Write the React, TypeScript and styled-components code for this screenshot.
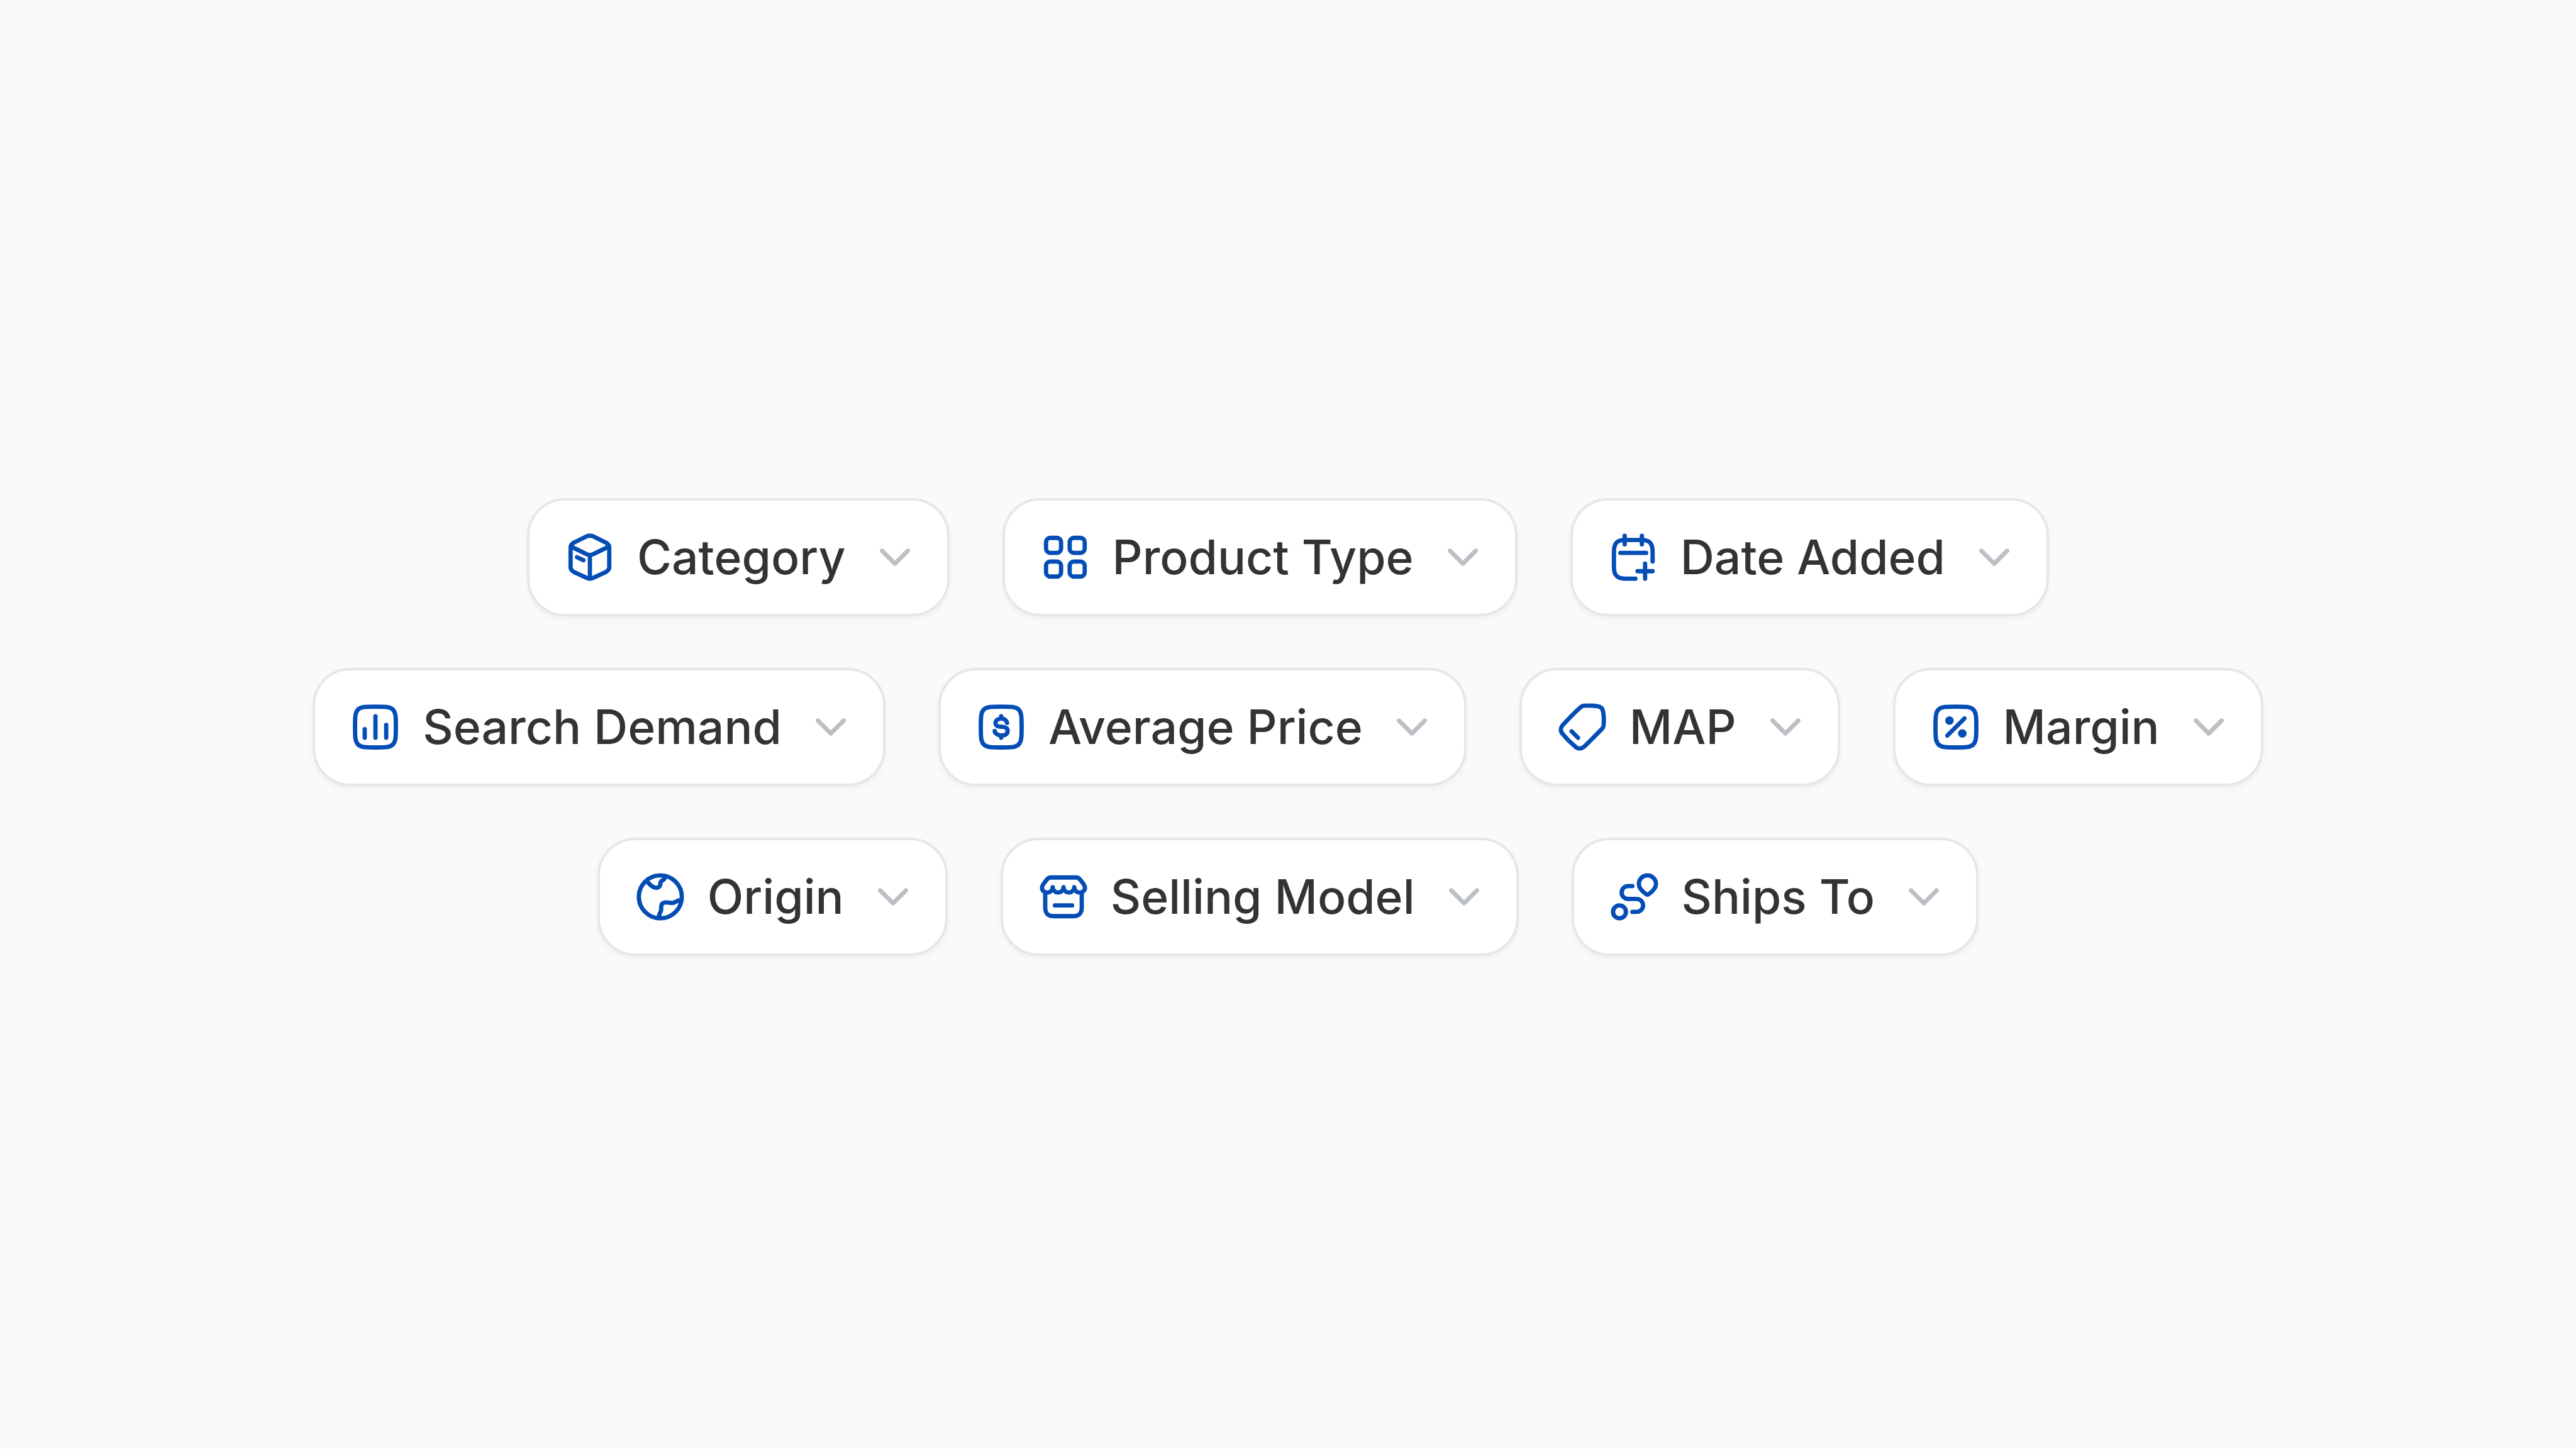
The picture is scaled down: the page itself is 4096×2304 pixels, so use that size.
import React from "react";
import styled, { createGlobalStyle } from "styled-components";

const GlobalStyle = createGlobalStyle`
  body {
    margin: 0;
    background: #fafafa;
    font-family: Inter, "Liberation Sans", sans-serif;
  }
`;

const Page = styled.main`
  min-height: 100vh;
  box-sizing: border-box;
  padding-top: 8px;
  display: flex;
  flex-direction: column;
  align-items: center;
  justify-content: center;
  gap: 82px;
`;

const Row = styled.div`
  display: flex;
  justify-content: center;
  gap: 84px;
`;

const Chip = styled.button`
  display: flex;
  align-items: center;
  padding: 49px 42px 49px 55px;
  border: 4px solid #e7e7e7;
  border-radius: 60px;
  background: #ffffff;
  box-shadow: 0 4px 8px rgba(0, 0, 0, 0.05);
  font: inherit;
  color: #333333;
  cursor: pointer;
`;

const Label = styled.span`
  margin: 0 37px 0 34px;
  font-size: 75px;
  line-height: 82px;
  font-weight: 500;
  white-space: nowrap;
`;

const Icon = styled.svg<{ $tone: string }>`
  width: 82px;
  height: 82px;
  flex: none;
  fill: none;
  stroke: ${(p) => p.$tone};
  stroke-width: 2;
  stroke-linecap: round;
  stroke-linejoin: round;
`;

const squircle =
  "M2.5 12C2.5 7.52 2.5 5.28 3.89 3.89C5.28 2.5 7.52 2.5 12 2.5C16.48 2.5 18.72 2.5 20.11 3.89C21.5 5.28 21.5 7.52 21.5 12C21.5 16.48 21.5 18.72 20.11 20.11C18.72 21.5 16.48 21.5 12 21.5C7.52 21.5 5.28 21.5 3.89 20.11C2.5 18.72 2.5 16.48 2.5 12Z";

const icons = {
  cube: (
    <>
      <path d="M10.2 2.4C11.3 1.9 12.7 1.9 13.8 2.4L19.4 5.2C20.4 5.8 21 6.4 21 7.3V16.7C21 17.6 20.4 18.3 19.4 18.9L13.8 21.5C12.7 22.1 11.3 22.1 10.2 21.5L4.6 18.9C3.6 18.3 3 17.6 3 16.7V7.3C3 6.4 3.6 5.8 4.6 5.2Z" />
      <path d="M3.7 7.3L10.3 10.5C11.4 11.1 12.6 11.1 13.7 10.5L20.3 7.3M12 11V21.5M6 12L9 13.4" />
    </>
  ),
  grid: (
    <>
      <rect x="3" y="3" width="7" height="7" rx="2" />
      <rect x="14" y="3" width="7" height="7" rx="2" />
      <rect x="3" y="14" width="7" height="7" rx="2" />
      <rect x="14" y="14" width="7" height="7" rx="2" />
    </>
  ),
  calendar: (
    <path d="M8 2V6M16 2V6M6 10H18M21 14V9.5C21 5.6 19.6 4 16 4H8C4.4 4 3 5.6 3 9.5V16.5C3 20.5 4.6 22 8.5 22H13M17.5 15V22M14 18.5H21" />
  ),
  chart: <path d={`${squircle}M7 17V13M12 17V7M17 17V11`} />,
  dollar: (
    <>
      <path d={squircle} />
      <path d="M14.71 10.06C14.61 9.3 13.74 8.07 12.16 8.07C10.33 8.07 9.56 9.08 9.41 9.59C9.16 10.26 9.21 11.66 11.35 11.81C14.04 12 15.11 12.32 14.97 13.96C14.84 15.6 13.34 15.95 12.16 15.91C10.98 15.88 9.05 15.33 8.97 13.87M11.97 7V8.07M11.97 15.9V17" />
    </>
  ),
  tag: (
    <path d="M12.7 2.1C15.5 1.9 18 2 19.8 2.5C20.8 2.8 21.2 3.2 21.5 4.2C22 6 22.1 8.5 21.9 11.3C21.8 12 21.7 12.3 21.2 12.8C18.6 15.4 15.6 18.6 12.8 21.2C11.6 22.2 10 22.3 8.8 21.2C6.6 19.4 4.6 17.4 2.8 15.2C1.7 13.9 1.8 12.4 2.8 11.2C5.4 8.4 8.4 5.3 11.2 2.8C11.7 2.3 12 2.15 12.7 2.1ZM7 14L10 17" />
  ),
  percent: (
    <>
      <path d={`${squircle}M8 16L16 8`} />
      <circle cx="9" cy="9" r="1" />
      <circle cx="15" cy="15" r="1" />
    </>
  ),
  globe: (
    <>
      <circle cx="12" cy="12" r="10" />
      <path d="M5.6 4.8C7 5.9 8 7.8 10 7.8C11.5 7.8 12 6.9 12 6C12 5 12.4 4.6 13.2 4.2C14 3.8 14.2 3.2 14.1 2.4M11.3 21.6C11.3 19.6 12.4 19 12.4 18V16.8C12.4 15.2 13.2 14.6 14.8 14.6C16 14.6 16.7 14.9 17.5 14.9C18.9 14.9 19.3 13.6 21.6 13.5" />
    </>
  ),
  store: (
    <path d="M7 7.5A2.5 2.5 0 0 1 4.5 10C3 10 2 9 2 7.9C2 7.2 2.2 6.7 2.7 6L4.3 3.9C4.8 3.3 5.4 3 6.2 3H17.8C18.6 3 19.2 3.3 19.7 3.9L21.3 6C21.8 6.7 22 7.2 22 7.9C22 9 21 10 19.5 10A2.5 2.5 0 0 1 17 7.5A2.5 2.5 0 0 1 12 7.5A2.5 2.5 0 0 1 7 7.5M3.5 10.2V16.8C3.5 19.8 4.7 21 7.7 21H16.3C19.3 21 20.5 19.8 20.5 16.8V10.2M8 16H16" />
  ),
  route: (
    <>
      <circle cx="5" cy="19" r="3" />
      <path d="M11 7H9A3 3 0 0 0 9 13H13A3 3 0 0 1 13 19H11M18 2A4 4 0 0 1 22 6C22 7.9 20.6 9.4 18.4 10.9Q18 11.1 17.6 10.9C15.4 9.4 14 7.9 14 6A4 4 0 0 1 18 2Z" />
    </>
  ),
};

type Filter = { icon: keyof typeof icons; label: string };

const rows: Filter[][] = [
  [
    { icon: "cube", label: "Category" },
    { icon: "grid", label: "Product Type" },
    { icon: "calendar", label: "Date Added" },
  ],
  [
    { icon: "chart", label: "Search Demand" },
    { icon: "dollar", label: "Average Price" },
    { icon: "tag", label: "MAP" },
    { icon: "percent", label: "Margin" },
  ],
  [
    { icon: "globe", label: "Origin" },
    { icon: "store", label: "Selling Model" },
    { icon: "route", label: "Ships To" },
  ],
];

function FilterChip({ icon, label }: Filter) {
  return (
    <Chip type="button" aria-haspopup="listbox">
      <Icon viewBox="0 0 24 24" $tone="#034db5" aria-hidden="true">
        {icons[icon]}
      </Icon>
      <Label>{label}</Label>
      <Icon viewBox="0 0 24 24" $tone="#bcc0c5" aria-hidden="true">
        <path d="M6 9L12 15L18 9" />
      </Icon>
    </Chip>
  );
}

export default function App() {
  return (
    <>
      <GlobalStyle />
      <Page>
        {rows.map((row) => (
          <Row key={row[0].label}>
            {row.map((filter) => (
              <FilterChip key={filter.label} {...filter} />
            ))}
          </Row>
        ))}
      </Page>
    </>
  );
}
